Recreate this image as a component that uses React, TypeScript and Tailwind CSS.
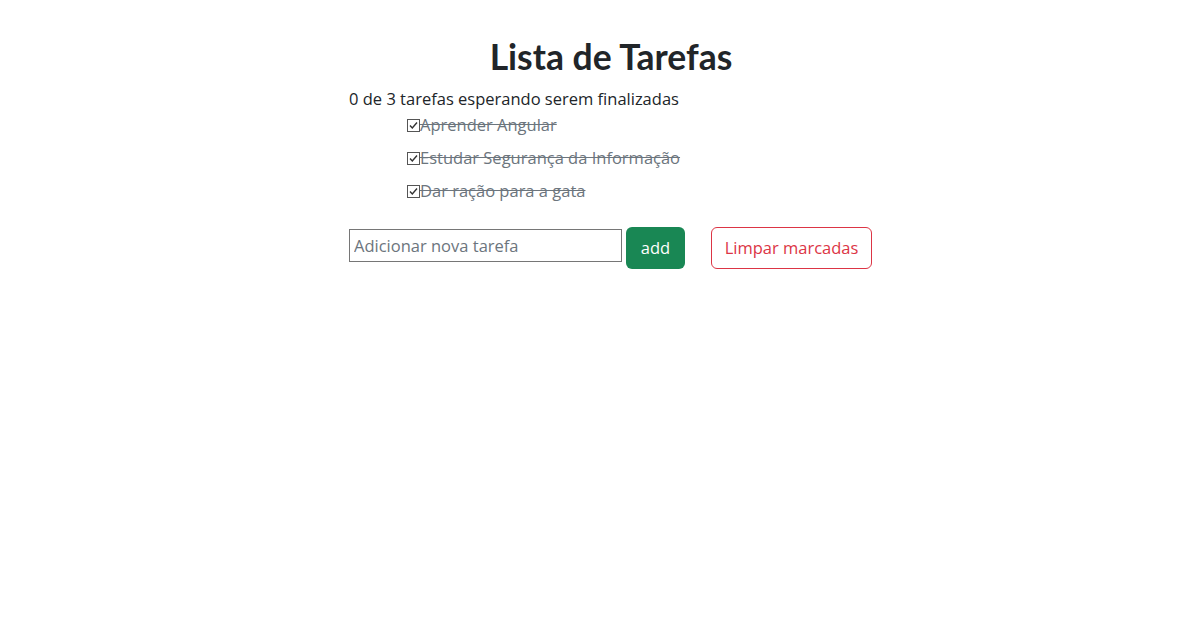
import { useState } from "react";

/* ─── Data ────────────────────────────────────────────────── */

interface Task {
  id: number;
  text: string;
  done: boolean;
}

const INITIAL_TASKS: Task[] = [
  { id: 1, text: "Aprender Angular", done: true },
  { id: 2, text: "Estudar Segurança da Informação", done: true },
  { id: 3, text: "Dar ração para a gata", done: true },
];

const FONT = "font-['Open_Sans','Noto_Sans',sans-serif]";

/* ─── Checkbox ────────────────────────────────────────────── */

function CheckBox({ checked, onClick }: { checked: boolean; onClick: () => void }) {
  return (
    <span
      onClick={onClick}
      className="inline-flex h-[13px] w-[13px] shrink-0 cursor-pointer items-center justify-center border border-[#555] bg-white"
    >
      {checked && (
        <svg width="9" height="9" viewBox="0 0 9 9" fill="none">
          <path d="M1 4.5L3.3 7L8 1.5" stroke="#333" strokeWidth="1.4" />
        </svg>
      )}
    </span>
  );
}

/* ─── App ─────────────────────────────────────────────────── */

export default function App() {
  const [tasks, setTasks] = useState<Task[]>(INITIAL_TASKS);
  const [draft, setDraft] = useState("");

  const pending = tasks.filter((t) => !t.done).length;

  const toggle = (id: number) =>
    setTasks((prev) => prev.map((t) => (t.id === id ? { ...t, done: !t.done } : t)));

  const addTask = () => {
    if (!draft.trim()) return;
    setTasks((prev) => [...prev, { id: Date.now(), text: draft.trim(), done: false }]);
    setDraft("");
  };

  return (
    <div className={`min-h-screen bg-white text-[#212529] ${FONT}`}>
      <div className="ml-[349px] w-[524px] pt-[32px]">
        <h1 className="h-[48px] text-center font-['Lato',sans-serif] text-[35.5px] font-bold leading-[50px]">
          Lista de Tarefas
        </h1>

        <p className="mt-[7px] text-[16.5px] leading-[24px]">
          {pending} de {tasks.length} tarefas esperando serem finalizadas
        </p>

        {/* ── task list ── */}
        <ul className="ml-[58px] mt-[2px] flex flex-col gap-[9px]">
          {tasks.map((task) => (
            <li key={task.id} className="flex items-center text-[16.5px] leading-[24px]">
              <CheckBox checked={task.done} onClick={() => toggle(task.id)} />
              <span className={task.done ? "text-[#6c757d] line-through" : ""}>{task.text}</span>
            </li>
          ))}
        </ul>

        {/* ── add form ── */}
        <div className="mt-[24px] flex items-start">
          <input
            type="text"
            placeholder="Adicionar nova tarefa"
            value={draft}
            onChange={(e) => setDraft(e.target.value)}
            className="mt-[2px] h-[33px] w-[273px] border border-[#767676] px-[4px] text-[16.5px] outline-none placeholder:text-[#6c757d]"
          />
          <button
            type="button"
            onClick={addTask}
            className="ml-[4px] h-[42px] w-[59px] rounded-[6px] bg-[#198754] text-[16.5px] text-white"
          >
            add
          </button>
          <button
            type="button"
            onClick={() => setTasks((prev) => prev.filter((t) => !t.done))}
            className="ml-[26px] h-[42px] w-[161px] rounded-[6px] border border-[#dc3545] text-[16.5px] text-[#dc3545]"
          >
            Limpar marcadas
          </button>
        </div>
      </div>
    </div>
  );
}
